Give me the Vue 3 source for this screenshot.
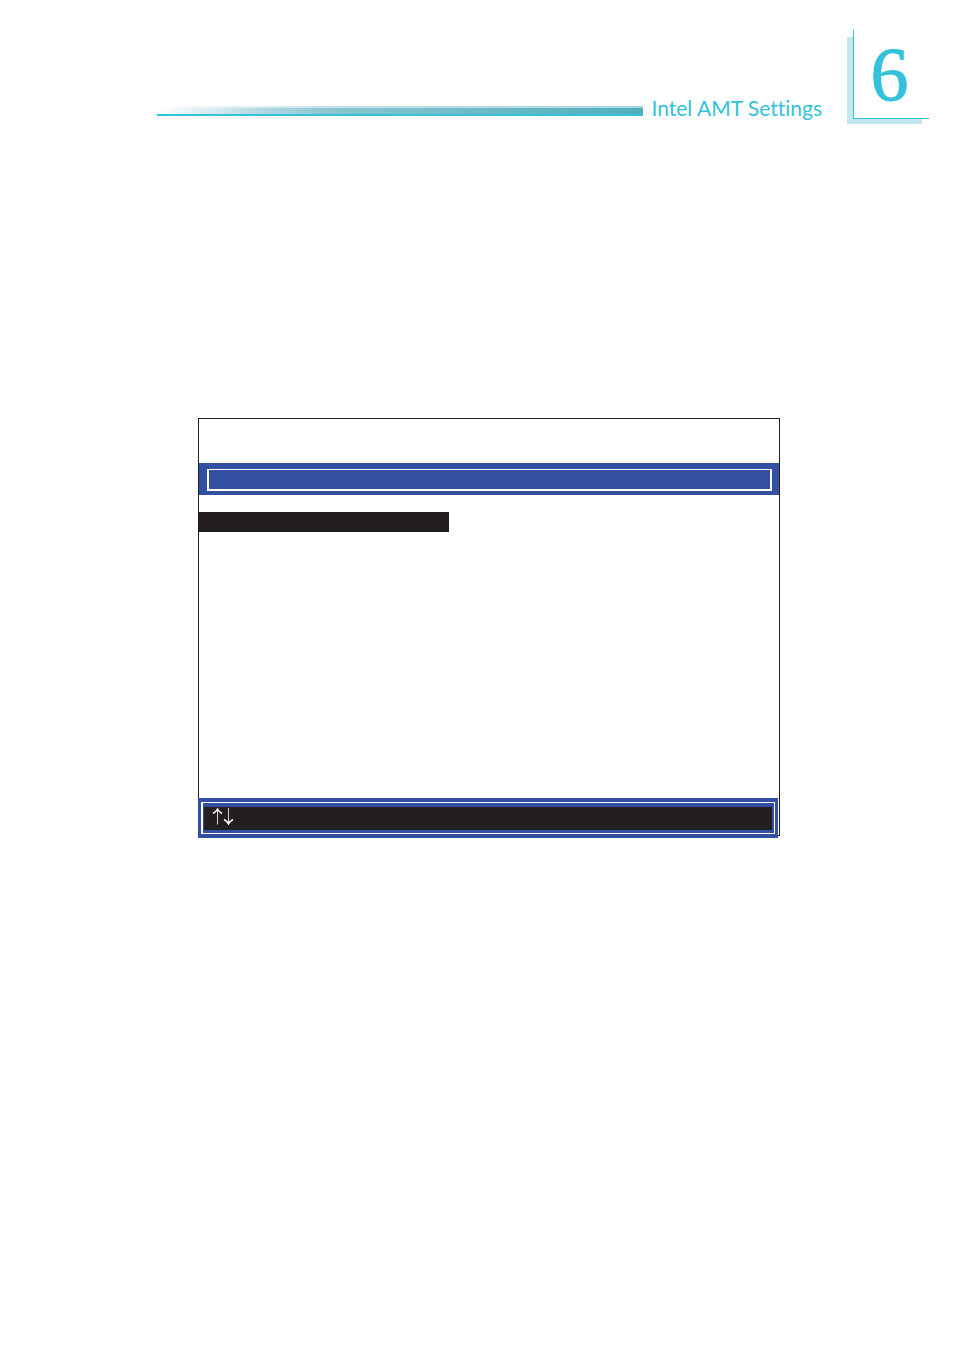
<template>
  <div class="page">
    <header class="page-header">
      <div class="rule"></div>
      <h1 class="title">{{ title }}</h1>
      <div class="chapter">
        <span class="chapter-number">{{ chapter }}</span>
      </div>
    </header>

    <main class="screen">
      <div class="screen-title">
        <div class="screen-title-box"></div>
      </div>
      <div class="menu">
        <div class="menu-item selected"></div>
      </div>
      <div class="key-bar">
        <div class="key-bar-frame">
          <div class="keys">
            <svg v-for="key in keys" :key="key.name" class="key" viewBox="0 0 11 17" role="img" :aria-label="key.name">
              <path class="shaft" d="M5.5 1V16.5" v-if="key.name === 'Up'" />
              <path class="shaft" d="M5.5 0V16" v-else />
              <path class="head" :d="key.head" />
            </svg>
          </div>
        </div>
      </div>
    </main>
  </div>
</template>

<script setup>
const title = 'Intel AMT Settings';
const chapter = 6;
const keys = [
  { name: 'Up', head: 'M1 5.5Q4 4 5.5 1Q7 4 10 5.5' },
  { name: 'Down', head: 'M1 11.5Q4 13 5.5 16Q7 13 10 11.5' },
];
</script>

<style>
body {
  margin: 0;
  background: #fff;
}
</style>

<style scoped>
.page {
  box-sizing: border-box;
  min-height: 100vh;
  padding-top: 30px;
}

.page-header {
  display: flex;
  align-items: flex-end;
  padding: 0 25px 0 157px;
}

.rule {
  flex: 1;
  height: 8px;
  margin-bottom: 8px;
  border-bottom: 2px solid #34c1dc;
  background:
    linear-gradient(rgba(255, 255, 255, 0.5) 2px, transparent 2px),
    linear-gradient(to right, #fff, #b7dae3 20%, #8ac5d1 36%, #4fafbe);
}

.title {
  margin: 0 24px 0 8px;
  color: #34c1dc;
  font: 400 21px/32px Lato, sans-serif;
  font-variant-ligatures: none;
  white-space: nowrap;
}

/* white card with its tinted shadow down and to the left */
.chapter {
  display: flex;
  justify-content: center;
  box-sizing: border-box;
  width: 76px;
  height: 89px;
  margin: 0 0 5px 7px;
  padding-right: 4px;
  border-left: 1px solid #34c1dc;
  border-bottom: 1px solid #34c1dc;
  background: #fff;
  box-shadow: -6px 6px 0 #c1e7ef;
  clip-path: polygon(-6px 7px, 0 7px, 0 0, 100% 0, 100% 100%, 69px 100%, 69px 94px, -6px 94px);
}

.chapter-number {
  color: #34c1dc;
  font: 400 76px/89px "Liberation Serif", serif;
  -webkit-text-stroke: 1px #34c1dc;
}

.screen {
  margin: 294px 174px 0 198px;
  border: 1px solid #231f20;
}

.screen-title {
  margin-top: 44px;
  padding: 6px 7px 4px 8px;
  background: #334fa2;
}

.screen-title-box {
  height: 19px;
  border: 2px solid #fff;
  border-top-width: 1px;
}

.menu {
  min-height: 286px;
  padding-top: 17px;
}

.menu-item {
  width: 250px;
  height: 20px;
}

.menu-item.selected {
  background: #231f20;
}

/* the key bar runs over the lower edge of the screen */
.key-bar {
  position: relative;
  margin: 0 1px -3px -1px;
  padding: 4px 3px;
  background: #334fa2;
}

.key-bar-frame {
  padding: 4px 2px 3px 1px;
  border: 1px solid #fff;
  border-left-width: 2px;
}

.keys {
  display: flex;
  box-sizing: border-box;
  height: 23px;
  padding: 1px 8px;
  background: #231f20;
}

.key {
  width: 11px;
  height: 17px;
  fill: none;
  stroke: #fff;
}

.shaft {
  stroke-width: 1;
  opacity: 0.8;
}

.head {
  stroke-width: 1.4;
}
</style>
